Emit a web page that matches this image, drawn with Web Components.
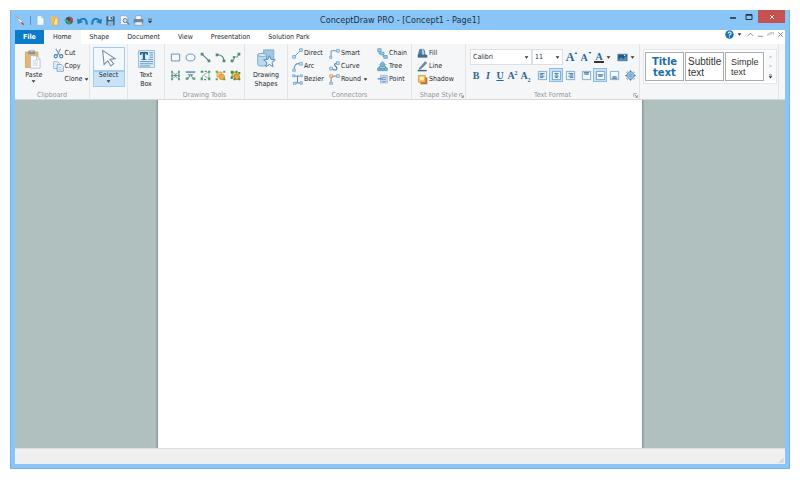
<!DOCTYPE html>
<html lang="en">
<head>
<meta charset="utf-8">
<title>ConceptDraw PRO - [Concept1 - Page1]</title>
<style>
html,body{height:100%;margin:0}
body{background:#fff;font-family:"DejaVu Sans Condensed","DejaVu Sans",sans-serif;font-size:7px;color:#26292d}
</style>
</head>
<body>
<draw-app></draw-app>
<script>
const icons = {
  pencil:'<path d="M1 2l2-1 9 8 2 4-4-1z" fill="#f4f4f8" stroke="#9aa7b8"/><path d="M2 1l4 4" stroke="#b7646a" stroke-width="1.5"/><path d="M10 10l4 4" stroke="#a64d55" stroke-width="2"/>',
  page:'<path d="M3 1h7l3 3v11H3z" fill="#eef8ff" stroke="#8fb2cc"/><path d="M10 1v3h3" fill="#bcdcf3" stroke="#8fb2cc"/>',
  folder:'<path d="M3 2h7v12H3z" fill="#f6bd55"/><path d="M9 4h4v11H6z" fill="#fbe19a" stroke="#d69a3a"/>',
  globe:'<circle cx="9" cy="8" r="5.5" fill="#48525c"/><path d="M9 8V2a6 6 0 0 1 5 8z" fill="#c84b43"/><path d="M9 8l4 4a6 6 0 0 1-8 0z" fill="#3c9a53"/><path d="M1 7h7v5z" fill="#4da866"/><circle cx="9" cy="7" r="2" fill="#294c77"/>',
  undo:'<path d="M14 14c1-8-5-11-10-6" fill="none" stroke="#2179b5" stroke-width="3"/><path d="M0 5l1 8 8-3z" fill="#2179b5"/>',
  redo:'<path d="M2 14C1 6 7 3 12 8" fill="none" stroke="#2179b5" stroke-width="3"/><path d="M16 5l-1 8-8-3z" fill="#2179b5"/>',
  save:'<path d="M2 2h12v13H2z" fill="#32627f"/><path d="M5 2h6v5H5z" fill="#d5e7f3"/><path d="M4 9h8v6H4z" fill="#8db5ce"/><path d="M8 3h2v3H8z" fill="#32627f"/>',
  preview:'<path d="M2 1h8l3 3v10H2z" fill="#eef5fa" stroke="#8ba1b5"/><circle cx="9" cy="8" r="3" fill="#c9e0f0" stroke="#657b91" stroke-width="1.4"/><path d="M11 10l4 4" stroke="#657b91" stroke-width="2"/>',
  print:'<path d="M4 1h8v6H4z" fill="#f5f7f9" stroke="#8093a2"/><path d="M1 6h14v6H1z" fill="#71818e"/><path d="M3 10h10l1 5H2z" fill="#e8eef2" stroke="#8093a2"/>',
  paste:'<path d="M2 4h17v21H2z" fill="#e3b678" stroke="#c9985b"/><path d="M6 2h9v5H6z" fill="#8c9298"/><path d="M8 1h5v3H8z" fill="#bdc2c6"/><path d="M9 9h8l5 5v12H9z" fill="#fafcff" stroke="#a5b2c2"/><path d="M17 9v5h5M12 16h7M12 19h7M12 22h7" fill="none" stroke="#b5c2d0"/>',
  cut:'<path d="M4 1l6 10M11 1L6 11" stroke="#7f97ac" stroke-width="1.6"/><circle cx="4" cy="12" r="2.3" fill="none" stroke="#3c80b8" stroke-width="1.6"/><circle cx="12" cy="12" r="2.3" fill="none" stroke="#3c80b8" stroke-width="1.6"/>',
  copy:'<path d="M1 1h6l2 2v8H1z" fill="#e5f1fa" stroke="#76a3c5"/><path d="M6 5h6l3 3v7H6z" fill="#eff7fd" stroke="#568bb3"/><path d="M8 9h4M8 12h5" stroke="#82b1d4"/>',
  cursor:'<path d="M5 2l2 19 5-5 4 7 4-3-5-6 7-1z" fill="#fff" stroke="#7990a8" stroke-width="1.5"/>',
  textbox:'<path d="M2 2h22v23H2z" fill="#e1f0fa" stroke="#77a9cc"/><path d="M4 4h11v4h-2V6h-2v8h2v1H6v-1h2V6H6v2H4z" fill="#235f94"/><path d="M17 5h5M17 8h5M17 11h5M15 14h7M4 17h18M4 20h18M4 23h14" stroke="#4d8bb8" stroke-width="1.2"/>',
  rect:'<path d="M2 3h12v10H2z" fill="#f4f9fd" stroke="#5e89aa" stroke-width="1.3"/>',
  oval:'<ellipse cx="8" cy="8" rx="6.5" ry="5" fill="#f4f9fd" stroke="#6689b4" stroke-width="1.3"/>',
  line:'<path d="M3 3l10 10" stroke="#587889" stroke-width="1.5"/><path d="M1 1h4v4H1zM11 11h4v4h-4z" fill="#4a8f68"/>',
  arctool:'<path d="M3 4c7 0 10 3 10 9" fill="none" stroke="#587889" stroke-width="1.5"/><path d="M1 2h4v4H1zM11 11h4v4h-4z" fill="#4a8f68"/>',
  bezier:'<path d="M3 13c5 0 1-8 5-6s2-1 5-4" fill="none" stroke="#587889" stroke-width="1.4"/><path d="M1 11h4v4H1zM11 1h4v4h-4zM4 6h3v3H4z" fill="#4a8f68"/>',
  nodes:'<path d="M3 1v14M13 1v14" stroke="#4d9670" stroke-width="2.4" stroke-dasharray="4 1"/><path d="M4 8h8M5 4l4 4-4 4M11 4L7 8l4 4" fill="none" stroke="#5f8795" stroke-width="1.3"/>',
  split:'<path d="M1 3h14" stroke="#4387a6" stroke-width="2"/><path d="M3 13c4-1 3-6 5-6s1 5 5 6M4 7h8" fill="none" stroke="#60849c" stroke-width="1.5"/><path d="M1 11h4v3H1zM11 11h4v3h-4z" fill="#5b9d75"/>',
  edit:'<path d="M3 13C3 6 8 5 13 3v10l-7-5" fill="none" stroke="#8298a8" stroke-width="1.1"/><path d="M1 1h4v3H1zM12 1h3v3h-3zM1 11h3v4H1zM12 11h3v4h-3zM7 1h3v2H7zM6 13h3v2H6z" fill="#4b9a63"/>',
  group:'<path d="M3 3h7v7H3z" fill="#f5cc69" stroke="#d78d30"/><circle cx="10" cy="10" r="4" fill="#f2ae46" stroke="#c97e2f"/><path d="M1 1h3v3H1zM12 1h3v3h-3zM1 12h3v3H1zM12 12h3v3h-3z" fill="#69a05c"/>',
  ungroup:'<path d="M3 3h7v7H3z" fill="#eacb46" stroke="#5d9140"/><circle cx="10" cy="10" r="4" fill="#f2a536" stroke="#b56b24"/><path d="M1 1h4v4H1zM8 1h3v3H8zM12 3h3v3h-3zM1 9h3v4H1zM5 12h3v3H5zM12 12h3v3h-3z" fill="#458c50"/>',
  shapes:'<path d="M9 1h14v16H9z" fill="#9ec8e6" stroke="#6aa0c8"/><path d="M1 8c0-3 12-3 12 0v13c0 3-12 3-12 0z" fill="#b9daf0" stroke="#5e95bc"/><ellipse cx="7" cy="8" rx="6" ry="2" fill="#e4f3fc" stroke="#5e95bc"/><path d="M17 9l2 5 6 .5-4.500 3.500 1.500 6-5-3-5 3 1.500-6L9 14.500l6-.5z" fill="#e9f5fd" stroke="#4e81aa" stroke-width="1.200"/>',
  direct:'<path d="M3 13L13 3" stroke="#6b93b3" stroke-width="1.3"/><path d="M1 11h4v4H1zM11 1h4v4h-4z" fill="#c5e2f7" stroke="#5a9fd0"/>',
  smart:'<path d="M3 12V4h8" fill="none" stroke="#6b93b3" stroke-width="1.4"/><path d="M1 12h3v3H1zM11 2h4v4h-4z" fill="#c5e2f7" stroke="#5a9fd0"/>',
  arc:'<path d="M3 12C3 7 6 3 11 4" fill="none" stroke="#6b93b3" stroke-width="1.5"/><path d="M1 12h4v3H1zM11 2h4v4h-4z" fill="#c5e2f7" stroke="#5a9fd0"/>',
  curve:'<path d="M4 11c6 5 10 0 6-3s-1-5 2-4" fill="none" stroke="#41779f" stroke-width="1.5"/><path d="M1 9h4v4H1zM11 1h4v4h-4z" fill="#c5e2f7" stroke="#5a9fd0"/>',
  bez:'<path d="M2 3h9M8 3v10M4 13h9" fill="none" stroke="#4d83ad" stroke-width="1.4"/><path d="M1 1h3v3H1zM2 12h4v3H2zM12 11h3v4h-3zM12 1h3v3h-3z" fill="#c5e2f7" stroke="#5a9fd0"/>',
  round:'<path d="M3 12V8c0-3 2-5 5-5h3" fill="none" stroke="#bc886d" stroke-width="1.700"/><path d="M1 1h4v4H1z" fill="#f6d4ae" stroke="#d3945e"/><path d="M11 1h4v4h-4zM1 12h4v3H1z" fill="#c5e2f7" stroke="#5a9fd0"/>',
  chain:'<path d="M3 4v4h6v5h3" fill="none" stroke="#5d9f7d" stroke-width="1.4"/><path d="M1 1h5v4H1zM5 6h5v4H5zM10 11h5v4h-5z" fill="#9ccbed" stroke="#5594c6"/>',
  tree:'<path d="M3 12c0-7 10-7 10 0" fill="none" stroke="#5ba878" stroke-width="1.8"/><path d="M8 1l4 4-4 4-4-4zM1 10h4v4H1zM11 10h4v4h-4zM6 10h4v4H6z" fill="#75b7e2" stroke="#438bb8"/>',
  point:'<path d="M5 2h10v11H5z" fill="#c7daee" stroke="#8fabd0"/><path d="M7 5h6M7 8h6M7 11h6" stroke="#6a90bd" stroke-width="1.2"/><path d="M1 7h7" stroke="#6a8bb5" stroke-width="2"/>',
  fill:'<path d="M4 2h6l2 8H2z" fill="#557fa6" stroke="#345f86"/><path d="M7 2l2-1 2 8-3 2z" fill="#b9d5e9"/><path d="M1 10h14v4H1z" fill="#426b94"/>',
  pen:'<path d="M4 10l8-9 2 2-8 8-3 1z" fill="#7194b3" stroke="#3f6588"/><path d="M1 14h13" stroke="#345f91" stroke-width="2"/>',
  shadow:'<path d="M5 5h10v10H5z" fill="#a8764a"/><path d="M2 2h10v10H2z" fill="#f6bf52" stroke="#d28d35"/><path d="M4 4h6v5H4z" fill="#fff0b4"/>',
  imagebtn:'<path d="M1 3h14v10H1z" fill="#235986" stroke="#7badcf"/><path d="M2 11l4-3 3 2 4-4 1 2v4H2z" fill="#568fbb"/><circle cx="11" cy="5" r="1" fill="#fff"/>',
  left:'<path d="M2 2h12v12H2z" fill="#eaf5fd" stroke="#5592bf"/><path d="M4 5h7M4 7h5M4 9h7M4 11h5" stroke="#245f8e" stroke-width="1.1"/>',
  center:'<path d="M2 2h12v12H2z" fill="#eaf5fd" stroke="#4385b7"/><path d="M5 5h6M6 7h4M5 9h6M6 11h4" stroke="#245f8e" stroke-width="1.1"/>',
  right:'<path d="M2 2h12v12H2z" fill="#eaf5fd" stroke="#5592bf"/><path d="M5 5h7M7 7h5M5 9h7M7 11h5" stroke="#245f8e" stroke-width="1.1"/>',
  top:'<path d="M2 2h12v12H2z" fill="#f2f9fe" stroke="#5592bf"/><path d="M4 4h8M5 6h6" stroke="#245f8e" stroke-width="1.4"/>',
  middle:'<path d="M2 2h12v12H2z" fill="#f2f9fe" stroke="#4385b7"/><path d="M4 7h8M5 9h6" stroke="#245f8e" stroke-width="1.4"/>',
  bottom:'<path d="M2 2h12v12H2z" fill="#f2f9fe" stroke="#5592bf"/><path d="M5 10h6M4 12h8" stroke="#245f8e" stroke-width="1.4"/>',
  world:'<path d="M4 4h8v8H4z" fill="#a6d0ed" stroke="#3e7caf"/><path d="M8 0l2 3H6zM8 16l-2-3h4zM0 8l3-2v4zM16 8l-3 2V6z" fill="#3e7caf"/><path d="M2 4l2-2M12 2l2 2M2 12l2 2M12 14l2-2M6 7h4M6 9h4" stroke="#3e7caf"/>',
  down:'<path d="M2 4h12l-6 8z" fill="#333"/>',
  qdown:'<path d="M3 3h10" stroke="#333" stroke-width="2"/><path d="M2 7h12l-6 7z" fill="#333"/>',
  up:'<path d="M3 11h10L8 5z" fill="#b9bcc0"/>',
  pale:'<path d="M3 5h10l-5 6z" fill="#b9bcc0"/>',
  growmark:'<path d="M2 12h12L8 4z" fill="#2a6797"/>',
  shrinkmark:'<path d="M2 4h12l-6 8z" fill="#2a6797"/>',
  launch:'<path d="M2 12V2h10" fill="none" stroke="#888" stroke-width="2"/><path d="M6 6l7 7M14 7v7H7" fill="none" stroke="#666" stroke-width="2"/>',
  min:'<path d="M2 10h12" stroke="#1e2a35" stroke-width="3"/>',
  max:'<path d="M2 3h12v10H2z" fill="none" stroke="#1e3347" stroke-width="2"/><path d="M2 4h12" stroke="#1e3347" stroke-width="3"/>',
  close:'<path d="M3 3l10 10M13 3L3 13" stroke="#fff" stroke-width="2.5"/>',
  help:'<circle cx="8" cy="8" r="7.500" fill="#1672b6"/><path d="M5.500 6.500c0-4 5.500-3.500 5.500-.5 0 2-3 2-3 4M8 11.500v2" fill="none" stroke="#fff" stroke-width="1.800"/>',
  caret:'<path d="M2 11l6-6 6 6" fill="none" stroke="#777" stroke-width="2"/>',
  dash:'<path d="M2 12h12" stroke="#888" stroke-width="2"/>',
  restore:'<path d="M2 11V7h9M6 4h9v4" fill="none" stroke="#999" stroke-width="1.600"/>',
  cross:'<path d="M3 3l10 10M13 3L3 13" stroke="#777" stroke-width="2"/>',
  grip:'<path d="M15 1v14H1z" fill="#d2d2d2"/><path d="M11 15l4-4M6 15l9-9" stroke="#eee"/>'
};

class DrawIcon extends HTMLElement {
  connectedCallback() {
    const big = this.hasAttribute('big');
    const root = this.attachShadow({mode:'open'});
    root.innerHTML = `<style>:host{display:block;flex:none;width:10px;height:10px}svg{display:block;width:100%;height:100%}</style>
      <svg viewBox="${big ? '0 0 26 27' : '0 0 16 16'}" aria-hidden="true">${icons[this.getAttribute('name')]}</svg>`;
  }
}
customElements.define('draw-icon', DrawIcon);

/* Compact command: icon and optional label on one line */
class ToolButton extends HTMLElement {
  connectedCallback() {
    const root = this.attachShadow({mode:'open'});
    const icon = this.getAttribute('icon');
    root.innerHTML = `<style>
      :host{display:flex;min-width:0}
      button{all:unset;box-sizing:border-box;display:flex;align-items:center;justify-content:var(--tool-justify,flex-start);gap:1px;width:100%;white-space:nowrap;line-height:13px}
      draw-icon{width:var(--icon-size,11px);height:var(--icon-size,11px)}
      .blank{flex:none;width:var(--icon-size,11px)}
      .arrow{width:5px;height:5px;margin-left:1px}
      :host([on]) button{background:#cde4f7;box-shadow:inset 0 0 0 1px #8dbbe0}
      button:focus-visible{outline:1px solid #3c80b8}
    </style><button aria-label="${this.getAttribute('label') || this.textContent.trim()}">
      ${icon ? `<draw-icon name="${icon}"></draw-icon>` : this.hasAttribute('indent') ? '<span class="blank"></span>' : ''}
      <slot></slot>${this.hasAttribute('menu') ? '<draw-icon class="arrow" name="down"></draw-icon>' : ''}</button>`;
  }
}
customElements.define('tool-button', ToolButton);

/* Tall command: icon over label */
class BigButton extends HTMLElement {
  connectedCallback() {
    const root = this.attachShadow({mode:'open'});
    root.innerHTML = `<style>
      :host{display:flex;justify-content:center}
      button{all:unset;box-sizing:border-box;display:flex;flex-direction:column;align-items:center;width:32px;height:40px;text-align:center;line-height:9px}
      .pic{flex:none;display:flex;align-items:center;justify-content:center;width:100%;height:24px}
      .pic draw-icon{width:19px;height:20px}
      .lab{flex:1;width:100%;white-space:nowrap}
      .arrow{width:5px;height:5px;margin:-1px auto 0}
      :host([on]) button{box-shadow:inset 0 0 0 1px #a3cbec}
      :host([on]) .pic{background:#f3f8fd;box-shadow:inset 0 0 0 1px #a3cbec}
      :host([on]) .lab{background:#c9e2f7;box-shadow:inset 0 0 0 1px #a3cbec}
      button:focus-visible{outline:1px solid #3c80b8}
    </style><button><span class="pic"><draw-icon big name="${this.getAttribute('icon')}"></draw-icon></span>
      <span class="lab"><slot></slot>${this.hasAttribute('menu') ? '<draw-icon class="arrow" name="down"></draw-icon>' : ''}</span></button>`;
  }
}
customElements.define('big-button', BigButton);

class RibbonGroup extends HTMLElement {
  connectedCallback() {
    const root = this.attachShadow({mode:'open'});
    const label = this.getAttribute('label') || '';
    root.innerHTML = `<style>
      :host{box-sizing:border-box;display:flex;flex-direction:column;flex:none;border-right:1px solid #e2e4e7}
      .body{display:flex;flex:1;padding-top:3px}
      footer{display:grid;grid-template-columns:minmax(0,1fr) auto minmax(0,1fr);align-items:center;height:8px;color:#93979c;line-height:8px;white-space:nowrap}
      .launch{all:unset;justify-self:end;margin-right:1px}
      .launch draw-icon{width:5px;height:5px}
    </style><div class="body"><slot></slot></div>
    <footer><span></span><span>${label}</span>${this.hasAttribute('launcher') ? `<button class="launch" aria-label="${label} options"><draw-icon name="launch"></draw-icon></button>` : ''}</footer>`;
  }
}
customElements.define('ribbon-group', RibbonGroup);

class TitleBar extends HTMLElement {
  connectedCallback() {
    const root = this.attachShadow({mode:'open'});
    const quick = [['page','New'],['folder','Open'],['globe','Solutions'],['undo','Undo'],['redo','Redo'],['save','Save'],['preview','Preview'],['print','Print']];
    root.innerHTML = `<style>
      :host{display:grid;grid-template-columns:1fr auto 1fr;align-items:center;height:20px;flex:none}
      h1{margin:0;font-size:9px;font-weight:400;line-height:20px;color:#1d2f40;white-space:nowrap}
      .quick{display:flex;align-items:center;padding-top:1px}
      .quick>*{flex:none}
      .quick tool-button{width:14px;--icon-size:11px}
      .sep{width:1px;height:9px;margin:0 4px 0 5px;background:#5f91b8}
      .quick .menu{width:6px;--icon-size:6px}
      .win{display:flex;align-self:start;justify-content:flex-end;--icon-size:8px;--tool-justify:center}
      .win tool-button{width:16px;height:13px}
      .win .close{width:27px;margin-left:1px;background:#c75050;--icon-size:6px}
    </style>
    <div class="quick"><draw-icon name="pencil"></draw-icon><span class="sep"></span>
    ${quick.map(q => `<tool-button icon="${q[0]}" label="${q[1]}"></tool-button>`).join('')}
    <tool-button class="menu" icon="qdown" label="Customize"></tool-button></div>
    <h1>ConceptDraw PRO - [Concept1 - Page1]</h1>
    <div class="win"><tool-button icon="min" label="Minimize"></tool-button><tool-button icon="max" label="Maximize"></tool-button><tool-button class="close" icon="close" label="Close"></tool-button></div>`;
  }
}
customElements.define('title-bar', TitleBar);

class RibbonTabs extends HTMLElement {
  connectedCallback() {
    const root = this.attachShadow({mode:'open'});
    root.innerHTML = `<style>
      :host{display:flex;justify-content:space-between;flex:none;background:#fff;height:14px}
      nav,.right{display:flex}
      button{all:unset;padding:0 9px;line-height:14px;white-space:nowrap}
      .file{background:#0a7acb;color:#fff;font-weight:700;padding:0 8px}
      .active{background:#f5f6f7}
      .right{align-items:center;align-self:flex-start;--tool-justify:center;--icon-size:7px}
      .right tool-button{width:10px}
      .right .help{--icon-size:9px}
      .right .drop{--icon-size:5px;margin-right:1px}
    </style><nav><button class="file">File</button><button class="active">Home</button>${['Shape','Document','View','Presentation','Solution Park'].map(t => `<button>${t}</button>`).join('')}</nav>
    <div class="right"><tool-button class="help" icon="help" label="Help"></tool-button><tool-button class="drop" icon="down" label="Help menu"></tool-button><tool-button icon="caret" label="Collapse ribbon"></tool-button><tool-button icon="dash" label="Minimize document"></tool-button><tool-button icon="restore" label="Restore document"></tool-button><tool-button icon="cross" label="Close document"></tool-button></div>`;
  }
}
customElements.define('ribbon-tabs', RibbonTabs);

class TextFormat extends HTMLElement {
  connectedCallback() {
    const root = this.attachShadow({mode:'open'});
    root.innerHTML = `<style>
      :host{display:flex;flex-direction:column;gap:3px;padding:2px 0 0 4px}
      .row{display:flex;align-items:center}
      .box{display:grid;align-items:center;height:16px;box-sizing:border-box;border:1px solid #dcdfe3;background:#fff}
      .box>*{grid-area:1/1}
      .box draw-icon{width:5px;height:5px;justify-self:end;margin-right:2px;pointer-events:none}
      .font{width:62px}.size{width:31px;margin-right:2px}
      select{appearance:none;border:0;margin:0;padding:0 2px;width:100%;background:none;font:inherit;color:inherit}
      .row tool-button{height:14px;--tool-justify:center;width:14px;color:#2a6797;font-family:"Liberation Serif",serif;font-weight:700;font-size:10px}
      .row .n{width:12px}.row .m{width:13px}
      .row .large{font-size:12px;width:14px}
      .row .wide{width:17px;margin-left:1px}
      .row .pic{width:18px;margin-left:6px}
      .gap{width:3px}.gap.two{width:2px}
      .mark{width:4px;height:4px;align-self:flex-start;margin:1px 0 0 -1px}
      sup,sub{font-size:6px;line-height:0}
      .bar{box-shadow:inset 0 -2px #333;padding:0 1px;line-height:12px}
    </style>
    <div class="row"><div class="box font"><select aria-label="Font"><option>Calibri</option></select><draw-icon name="down"></draw-icon></div>
      <div class="box size"><select aria-label="Font size"><option>11</option></select><draw-icon name="down"></draw-icon></div>
      <tool-button class="large" label="Grow font"><span>A</span><draw-icon class="mark" name="growmark"></draw-icon></tool-button><tool-button label="Shrink font"><span>A</span><draw-icon class="mark" name="shrinkmark"></draw-icon></tool-button>
      <tool-button class="wide" menu label="Font color"><span class="bar">A</span></tool-button><tool-button class="pic" menu icon="imagebtn" label="Background"></tool-button></div>
    <div class="row"><tool-button class="n">B</tool-button><tool-button class="n"><i>I</i></tool-button><tool-button class="n"><u>U</u></tool-button><tool-button class="m" label="Superscript"><span>A<sup>2</sup></span></tool-button><tool-button class="m" label="Subscript"><span>A<sub>2</sub></span></tool-button>
      <span class="gap"></span><tool-button icon="left" label="Align left"></tool-button><tool-button on icon="center" label="Align center"></tool-button><tool-button icon="right" label="Align right"></tool-button>
      <span class="gap two"></span><tool-button icon="top" label="Align top"></tool-button><tool-button on icon="middle" label="Align middle"></tool-button><tool-button icon="bottom" label="Align bottom"></tool-button>
      <span class="gap two"></span><tool-button icon="world" label="Text block"></tool-button></div>`;
  }
}
customElements.define('text-format', TextFormat);

class StyleGallery extends HTMLElement {
  connectedCallback() {
    const root = this.attachShadow({mode:'open'});
    root.innerHTML = `<style>
      :host{display:flex;align-self:flex-start;margin:2px 0 0 3px;border:1px solid #e4e6e8;background:#fff;padding:2px 0 2px 1px;font-family:"Liberation Sans",sans-serif;color:#333}
      .card{all:unset;box-sizing:border-box;width:39px;height:29px;margin-right:1px;border:1px solid #a9adb1;display:flex;flex-direction:column;justify-content:center;line-height:11px;white-space:nowrap;padding-left:2px}
      .title{font:700 10px/11px "DejaVu Sans",sans-serif;color:#1c6ea8;text-align:center;padding:0}
      .sub{font-size:10px}.simple{font-size:9px;line-height:10px;padding-left:5px}
      .scroll{display:flex;flex-direction:column;justify-content:space-between;width:11px;background:#f8f9fa;--icon-size:5px;--tool-justify:center}
      .scroll tool-button{height:9px}
    </style><button class="card title"><span>Title</span><span>text</span></button><button class="card sub"><span>Subtitle</span><span>text</span></button><button class="card simple"><span>Simple</span><span>text</span></button>
    <div class="scroll"><tool-button icon="up" label="Previous styles"></tool-button><tool-button icon="pale" label="Next styles"></tool-button><tool-button icon="qdown" label="More styles"></tool-button></div>`;
  }
}
customElements.define('style-gallery', StyleGallery);

class DrawRibbon extends HTMLElement {
  connectedCallback() {
    const root = this.attachShadow({mode:'open'});
    const tb = (icon, text, extra='') => `<tool-button icon="${icon}" ${extra}>${text}</tool-button>`;
    root.innerHTML = `<style>
      :host{display:flex;flex:none;box-sizing:border-box;height:56px;background:#f5f6f7;border-bottom:1px solid #d5d8da}
      .clip{width:75px}.sel{width:38px}.txt{width:37px}.tools{width:80px}.shp{width:43px}.conn{width:124px}.style{width:54px}.fmt{width:174px}.gal{width:139px}
      .clip big-button{width:38px}
      .sel big-button,.txt big-button,.shp big-button{width:100%}
      .stack{display:grid;grid-auto-rows:13px;align-content:start}
      .grid{display:grid;grid-template-columns:repeat(5,15px);grid-auto-rows:18px;align-content:start;padding:1px 0 0 3px;--tool-justify:center}
      .cols{display:grid;grid-template-columns:37px 48px 1fr;grid-auto-rows:13px;align-content:start;padding-left:4px;flex:1}
      .style .stack{padding-left:5px}
    </style>
    <ribbon-group class="clip" label="Clipboard"><big-button icon="paste" menu>Paste</big-button><div class="stack">${tb('cut','Cut')}${tb('copy','Copy')}<tool-button indent menu>Clone</tool-button></div></ribbon-group>
    <ribbon-group class="sel"><big-button icon="cursor" on menu>Select</big-button></ribbon-group>
    <ribbon-group class="txt"><big-button icon="textbox">Text<br>Box</big-button></ribbon-group>
    <ribbon-group class="tools" label="Drawing Tools"><div class="grid">${[['rect','Rectangle'],['oval','Ellipse'],['line','Line'],['arctool','Arc'],['bezier','Bezier'],['nodes','Edit nodes'],['split','Split'],['edit','Edit points'],['group','Group'],['ungroup','Ungroup']].map(i => tb(i[0],'',`label="${i[1]}"`)).join('')}</div></ribbon-group>
    <ribbon-group class="shp"><big-button icon="shapes">Drawing<br>Shapes</big-button></ribbon-group>
    <ribbon-group class="conn" label="Connectors"><div class="cols">${tb('direct','Direct')}${tb('smart','Smart')}${tb('chain','Chain')}${tb('arc','Arc')}${tb('curve','Curve')}${tb('tree','Tree')}${tb('bez','Bezier')}${tb('round','Round','menu')}${tb('point','Point')}</div></ribbon-group>
    <ribbon-group class="style" label="Shape Style" launcher><div class="stack">${tb('fill','Fill')}${tb('pen','Line')}${tb('shadow','Shadow')}</div></ribbon-group>
    <ribbon-group class="fmt" label="Text Format" launcher><text-format></text-format></ribbon-group>
    <ribbon-group class="gal"><style-gallery></style-gallery></ribbon-group>`;
  }
}
customElements.define('draw-ribbon', DrawRibbon);

class DrawApp extends HTMLElement {
  connectedCallback() {
    const root = this.attachShadow({mode:'open'});
    root.innerHTML = `<style>
      :host{display:flex;box-sizing:border-box;height:100%;padding:10px 10px 11px}
      .window{box-sizing:border-box;flex:1;min-width:0;display:flex;flex-direction:column;background:#89c6f7;border:1px solid #79b3e2;border-top-width:0;padding:0 4px 4px}
      main{flex:1;display:flex;justify-content:center;background:#b0c0bf;min-height:0}
      .sheet{width:62.8%;background:#fff;box-shadow:0 0 2px 1px #7b8987;clip-path:inset(0 -4px)}
      footer{flex:none;display:flex;justify-content:flex-end;align-items:flex-end;box-sizing:border-box;height:16px;background:#f0efef;border-top:1px solid #dcdcdc}
      footer draw-icon{width:6px;height:6px;margin:1px}
    </style><div class="window"><title-bar></title-bar><ribbon-tabs></ribbon-tabs><draw-ribbon></draw-ribbon>
      <main><div class="sheet"></div></main><footer><draw-icon name="grip"></draw-icon></footer></div>`;
  }
}
customElements.define('draw-app', DrawApp);
</script>
</body>
</html>
